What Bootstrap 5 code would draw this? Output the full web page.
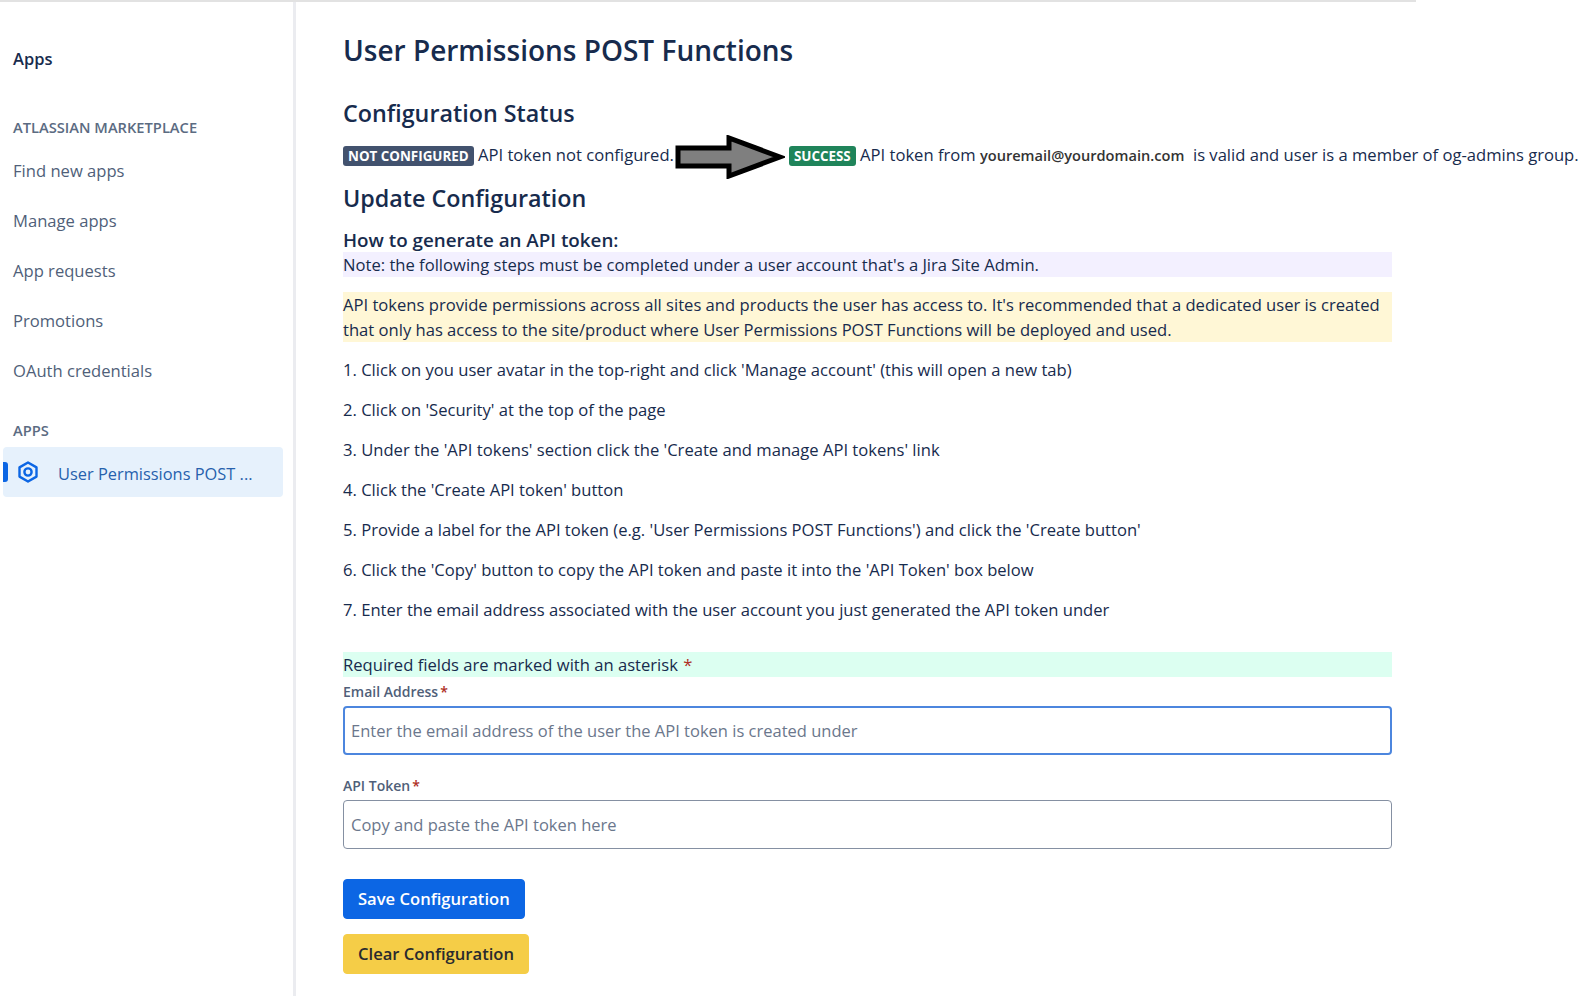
<!DOCTYPE html>
<html lang="en">
<head>
    <meta charset="UTF-8">
    <meta name="viewport" content="width=device-width, initial-scale=1.0">
    <title>User Permissions POST Functions</title>
    <link href="https://cdn.jsdelivr.net/npm/bootstrap@5.3.0/dist/css/bootstrap.min.css" rel="stylesheet">
    <style>
        body {
            font-family: "Open Sans", "Noto Sans", sans-serif;
            font-size: 16.6px;
            line-height: 25px;
            color: #172b4d;
            background: #fff;
            overflow: hidden;
        }

        .page-wrap {
            width: 1416px;
            height: 996px;
            border-top: 2px solid #e2e2e2;
        }

        .side-nav {
            width: 296px;
            flex: none;
            border-right: 3px solid #ebecf0;
            padding: 44px 10px 0 3px;
        }

        .side-title {
            padding-left: 10px;
            font-weight: 600;
            margin-bottom: 46px;
            font-size: 16.5px;
        }

        .side-group {
            padding-left: 10px;
            font-size: 14.7px;
            font-weight: 600;
            color: #5b6b82;
            line-height: 20px;
            margin-bottom: 9px;
        }

        .side-link {
            display: block;
            padding-left: 10px;
            height: 50px;
            line-height: 50px;
            color: #505f79;
            text-decoration: none;
        }

        .side-group-apps {
            margin-top: 24px;
            margin-bottom: 7px;
        }

        .side-active {
            height: 50px;
            background: #e6f1fc;
            border-radius: 4px;
            color: #2761ad;
            padding-left: 13px;
            position: relative;
        }

        .side-active::before {
            content: "";
            position: absolute;
            left: 0;
            top: 15px;
            width: 5px;
            height: 20px;
            background: #0c66e4;
            border-radius: 0 3px 3px 0;
        }

        .side-active span {
            margin-left: 18px;
            margin-top: 3px;
            font-size: 16.4px;
        }

        .main-col {
            padding: 0 0 0 47px;
            width: 1096px;
        }

        .main-col h1 {
            font-size: 28px;
            font-weight: 600;
            line-height: 34px;
            margin: 31px 0 31px;
            color: #172b4d;
        }

        .main-col h2 {
            font-size: 23.3px;
            font-weight: 600;
            line-height: 30px;
            margin: 0;
            color: #172b4d;
        }

        .status-line {
            white-space: nowrap;
            height: 48px;
            margin-top: 7px;
        }

        .status-tag {
            font-size: 13.4px;
            font-weight: 700;
            padding: 0 5px;
            border-radius: 3px;
            color: #fff;
            display: inline-block;
            line-height: 20px;
        }

        .tag-grey { background: #42526e; }
        .tag-green { background: #1f845a; }

        .status-arrow {
            width: 110px;
            height: 44px;
            vertical-align: middle;
            margin: 0 4px 0 1px;
        }

        .demo-email {
            font-size: 14.6px;
            font-weight: 600;
            color: #333;
        }

        .how-title {
            font-size: 18.8px;
            font-weight: 600;
            margin-top: 16px;
            line-height: 23px;
        }

        .note-band { background: #f3f0ff; margin-bottom: 15px; }
        .warn-band { background: #fff7d6; margin-bottom: 15px; }
        .req-band { background: #dcfff1; margin-top: 30px; margin-bottom: 5px; }

        .step-text { margin-bottom: 15px; }

        .req-star { color: #ae2e24; }

        .req-gap { margin-left: 1px; }

        .field-star { margin-left: 2px; }

        .field-label {
            font-size: 14px;
            font-weight: 600;
            color: #505f79;
            line-height: 20px;
            margin-bottom: 4px;
            display: block;
        }

        .field-input.form-control {
            height: 49px;
            font-size: 16.5px;
            padding: 0 7px;
            border: 1px solid #8590a2;
            border-radius: 4px;
            color: #172b4d;
            margin-bottom: 21px;
        }

        .field-input.form-control::placeholder { color: #6b778c; }

        .field-focus.form-control {
            border: 2px solid #4c86de;
            padding: 0 6px;
        }

        .field-last.form-control { margin-bottom: 30px; }

        .cfg-btn {
            font-size: 16.6px;
            font-weight: 600;
            line-height: 24px;
            padding: 7px 14px;
            border-radius: 4px;
            display: block;
            margin-bottom: 15px;
        }

        .cfg-btn.btn-primary { background: #0c66e4; border-color: #0c66e4; }
        .cfg-btn.btn-warning { background: #f5cd47; border-color: #f5cd47; color: #292a2e; }
    </style>
</head>
<body>
    <div class="page-wrap d-flex">
        <nav class="side-nav">
            <div class="side-title">Apps</div>
            <div class="side-group text-uppercase">Atlassian Marketplace</div>
            <a class="side-link" href="#">Find new apps</a>
            <a class="side-link" href="#">Manage apps</a>
            <a class="side-link" href="#">App requests</a>
            <a class="side-link" href="#">Promotions</a>
            <a class="side-link" href="#">OAuth credentials</a>
            <div class="side-group side-group-apps text-uppercase">Apps</div>
            <a class="side-link side-active d-flex align-items-center" href="#">
                <svg width="24" height="24" viewBox="0 0 24 24" fill="none" stroke="#0c66e4">
                    <path d="M12 2.5l8.5 4.9v9.2L12 21.5l-8.5-4.9V7.4z" stroke-width="2.4" stroke-linejoin="round"/>
                    <circle cx="12" cy="12" r="3.6" stroke-width="2.4"/>
                </svg>
                <span>User Permissions POST ...</span>
            </a>
        </nav>

        <main class="main-col">
            <h1>User Permissions POST Functions</h1>
            <h2>Configuration Status</h2>
            <div class="status-line">
                <span class="status-tag tag-grey">NOT CONFIGURED</span> API token not configured.<svg class="status-arrow" viewBox="0 0 110 44"><path d="M3 13H54V3L105 22 54 41V31H3z" fill="#7f7f7f" stroke="#000" stroke-width="5"/></svg><span class="status-tag tag-green">SUCCESS</span> API token from <span class="demo-email">youremail@yourdomain.com</span>&nbsp; is valid and user is a member of og-admins group.
            </div>
            <h2>Update Configuration</h2>
            <div class="how-title">How to generate an API token:</div>
            <div class="note-band">Note: the following steps must be completed under a user account that's a Jira Site Admin.</div>
            <div class="warn-band">API tokens provide permissions across all sites and products the user has access to. It's recommended that a dedicated user is created that only has access to the site/product where User Permissions POST Functions will be deployed and used.</div>
            <p class="step-text">1. Click on you user avatar in the top-right and click 'Manage account' (this will open a new tab)</p>
            <p class="step-text">2. Click on 'Security' at the top of the page</p>
            <p class="step-text">3. Under the 'API tokens' section click the 'Create and manage API tokens' link</p>
            <p class="step-text">4. Click the 'Create API token' button</p>
            <p class="step-text">5. Provide a label for the API token (e.g. 'User Permissions POST Functions') and click the 'Create button'</p>
            <p class="step-text">6. Click the 'Copy' button to copy the API token and paste it into the 'API Token' box below</p>
            <p class="step-text">7. Enter the email address associated with the user account you just generated the API token under</p>
            <div class="req-band">Required fields are marked with an asterisk <span class="req-star req-gap">*</span></div>
            <form>
                <label class="field-label" for="emailAddress">Email Address<span class="req-star field-star">*</span></label>
                <input class="form-control field-input field-focus" id="emailAddress" type="text" placeholder="Enter the email address of the user the API token is created under">
                <label class="field-label" for="apiToken">API Token<span class="req-star field-star">*</span></label>
                <input class="form-control field-input field-last" id="apiToken" type="text" placeholder="Copy and paste the API token here">
                <button class="btn btn-primary cfg-btn" type="button">Save Configuration</button>
                <button class="btn btn-warning cfg-btn" type="button">Clear Configuration</button>
            </form>
        </main>
    </div>

    <script src="https://cdn.jsdelivr.net/npm/bootstrap@5.3.0/dist/js/bootstrap.bundle.min.js"></script>
</body>
</html>
